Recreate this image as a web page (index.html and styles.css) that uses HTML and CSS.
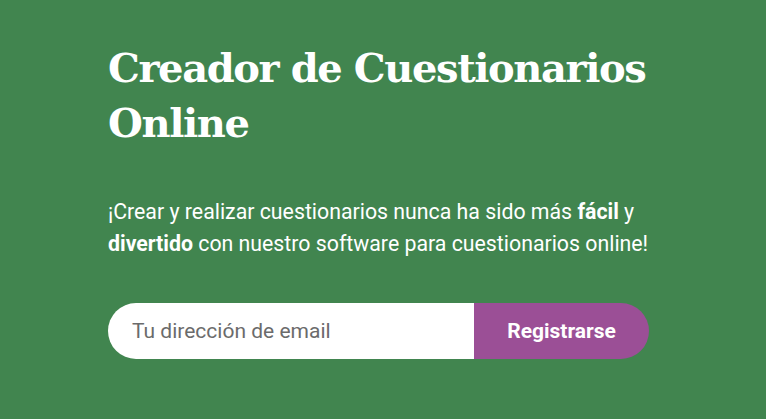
FILE: index.html
```html
<!DOCTYPE html>
<html lang="es">
<head>
<meta charset="utf-8">
<link rel="stylesheet" href="styles.css">
</head>
<body>
<section class="hero">
  <div class="inner">
    <h1 class="title">Creador de Cuestionarios Online</h1>
    <p class="lead">¡Crear y realizar cuestionarios nunca ha sido más <strong>fácil</strong> y <strong>divertido</strong> con nuestro software para cuestionarios online!</p>
    <form class="signup">
      <input class="email" type="email" placeholder="Tu dirección de email">
      <button class="submit" type="button">Registrarse</button>
    </form>
  </div>
</section>
</body>
</html>
```
FILE: styles.css
```css
html, body {
  margin: 0;
  padding: 0;
}
body {
  background: #41854f;
  font-family: Roboto, "Liberation Sans", sans-serif;
  color: #fff;
}
.hero {
  width: 766px;
  height: 419px;
  box-sizing: border-box;
  padding: 40px 0 0 108px;
}
.inner {
  width: 560px;
}
.title {
  margin: 0;
  font-family: "DejaVu Serif", serif;
  font-weight: 700;
  font-size: 40px;
  line-height: 55px;
  letter-spacing: -1.4px;
}
.lead {
  width: 560px;
  margin: 46px 0 0;
  font-size: 21.3px;
  line-height: 32px;
}
.lead strong {
  font-weight: 700;
}
.signup {
  margin-top: 43px;
  display: flex;
  width: 541px;
  height: 56px;
  border-radius: 28px;
  overflow: hidden;
}
.email {
  flex: 1;
  border: 0;
  outline: 0;
  margin: 0;
  padding: 0 0 0 24px;
  background: #fff;
  font-family: Roboto, sans-serif;
  font-size: 21px;
  color: #333;
}
.email::placeholder {
  color: #6b6b6b;
}
.submit {
  width: 175px;
  border: 0;
  margin: 0;
  background: #9b4f96;
  color: #fff;
  font-family: Roboto, sans-serif;
  font-weight: 700;
  font-size: 21px;
  padding: 0;
}
```
